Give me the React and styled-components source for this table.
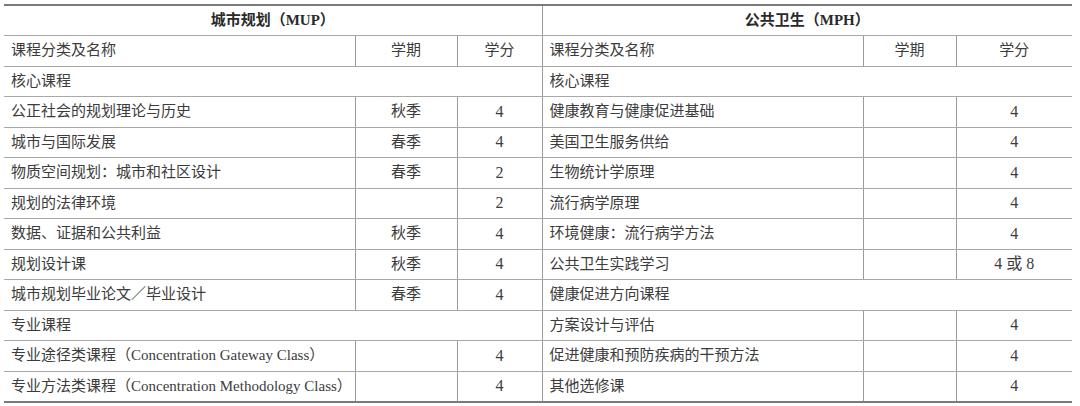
import React from "react";
import styled, { createGlobalStyle } from "styled-components";

const GlobalStyle = createGlobalStyle`
  body {
    margin: 0;
    background: #ffffff;
  }
`;

const Page = styled.div`
  padding: 4px 8px 4px 4px;
  font-family: "Liberation Serif", "Noto Sans CJK SC", serif;
  color: #3c3c3c;
`;

const Table = styled.table`
  width: 1068px;
  table-layout: fixed;
  border-collapse: collapse;
  border-top: 2px solid #7a7a7a;
  border-bottom: 2px solid #7a7a7a;
  font-size: 15px;
`;

const Col = styled.col`
  width: ${(p) => p.$w}px;
`;

const Row = styled.tr`
  height: 30.5px;
`;

const Cell = styled.td`
  padding: 0 7px;
  border-bottom: 1.5px solid #a8a8a8;
  border-left: ${(p) => (p.$line ? "1.5px solid #9a9a9a" : "none")};
  text-align: ${(p) => p.$align || "left"};
  font-weight: ${(p) => (p.$bold ? 700 : 400)};
  color: ${(p) => (p.$bold ? "#2a2a2a" : "inherit")};
  white-space: nowrap;
  vertical-align: middle;
  line-height: 1;
`;

const Num = styled.span`
  font-size: 16px;
`;

const widths = [351, 102, 85, 321, 93, 116];

const rows = [
  { left: "核心课程", right: "核心课程" },
  { left: ["公正社会的规划理论与历史", "秋季", "4"], right: ["健康教育与健康促进基础", "", "4"] },
  { left: ["城市与国际发展", "春季", "4"], right: ["美国卫生服务供给", "", "4"] },
  { left: ["物质空间规划：城市和社区设计", "春季", "2"], right: ["生物统计学原理", "", "4"] },
  { left: ["规划的法律环境", "", "2"], right: ["流行病学原理", "", "4"] },
  { left: ["数据、证据和公共利益", "秋季", "4"], right: ["环境健康：流行病学方法", "", "4"] },
  { left: ["规划设计课", "秋季", "4"], right: ["公共卫生实践学习", "", "4 或 8"] },
  { left: ["城市规划毕业论文／毕业设计", "春季", "4"], right: "健康促进方向课程" },
  { left: "专业课程", right: ["方案设计与评估", "", "4"] },
  { left: ["专业途径类课程（Concentration Gateway Class）", "", "4"], right: ["促进健康和预防疾病的干预方法", "", "4"] },
  { left: ["专业方法类课程（Concentration Methodology Class）", "", "4"], right: ["其他选修课", "", "4"] },
];

function Side({ data, first, header }) {
  if (typeof data === "string") {
    return (
      <Cell colSpan={3} $line={!first}>
        {data}
      </Cell>
    );
  }
  const [name, term, credit] = data;
  return (
    <>
      <Cell $line={!first}>{name}</Cell>
      <Cell $line $align="center">{term}</Cell>
      <Cell $line $align="center">
        {header ? credit : <Num>{credit}</Num>}
      </Cell>
    </>
  );
}

export default function App() {
  return (
    <Page>
      <GlobalStyle />
      <Table>
        <colgroup>
          {widths.map((w, i) => (
            <Col key={i} $w={w} />
          ))}
        </colgroup>
        <tbody>
          <Row>
            <Cell colSpan={3} $align="center" $bold>城市规划（MUP）</Cell>
            <Cell colSpan={3} $align="center" $bold $line>公共卫生（MPH）</Cell>
          </Row>
          <Row>
            <Side data={["课程分类及名称", "学期", "学分"]} first header />
            <Side data={["课程分类及名称", "学期", "学分"]} header />
          </Row>
          {rows.map((r, i) => (
            <Row key={i}>
              <Side data={r.left} first />
              <Side data={r.right} />
            </Row>
          ))}
        </tbody>
      </Table>
    </Page>
  );
}
